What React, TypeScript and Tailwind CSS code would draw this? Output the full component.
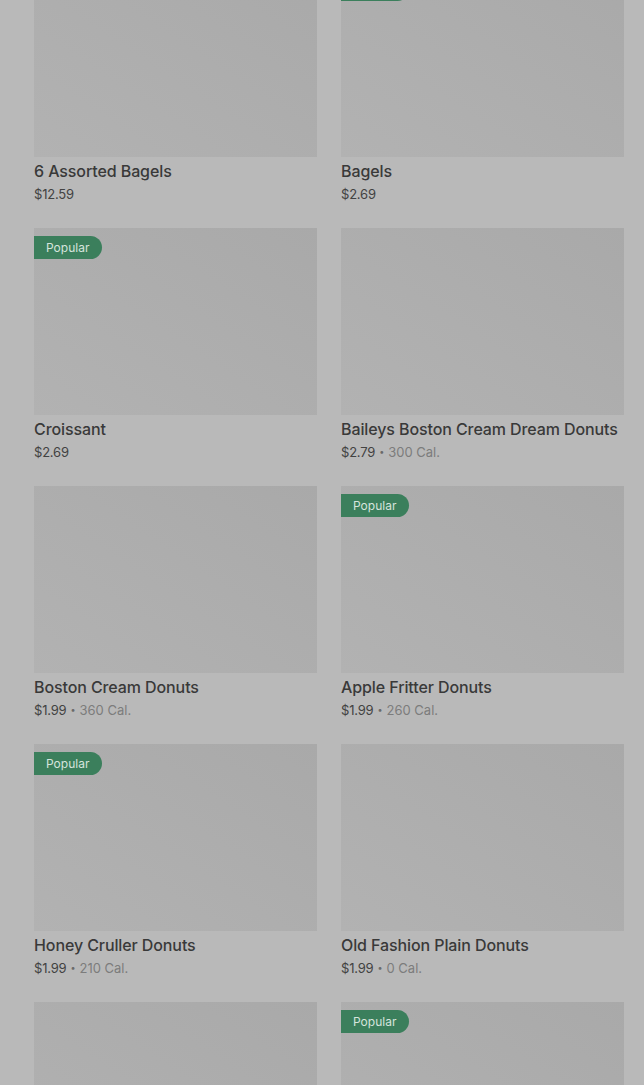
type Item = {
  name: string
  price: string
  cal?: string
  popular?: boolean
}

const items: Item[] = [
  { name: '6 Assorted Bagels', price: '$12.59' },
  { name: 'Bagels', price: '$2.69', popular: true },
  { name: 'Croissant', price: '$2.69', popular: true },
  { name: 'Baileys Boston Cream Dream Donuts', price: '$2.79', cal: '300 Cal.' },
  { name: 'Boston Cream Donuts', price: '$1.99', cal: '360 Cal.' },
  { name: 'Apple Fritter Donuts', price: '$1.99', cal: '260 Cal.', popular: true },
  { name: 'Honey Cruller Donuts', price: '$1.99', cal: '210 Cal.', popular: true },
  { name: 'Old Fashion Plain Donuts', price: '$1.99', cal: '0 Cal.' },
  { name: 'Chocolate Frosted Donuts', price: '$1.99', cal: '350 Cal.' },
  { name: 'Glazed Donuts', price: '$1.99', cal: '240 Cal.', popular: true },
]

function ItemCard({ item }: { item: Item }) {
  return (
    <div className="flex flex-col">
      <div className="relative h-[187px] bg-gradient-to-tr from-[#b2b2b2] to-[#a9a9a9]">
        {item.popular && (
          <span className="absolute left-0 top-[8px] flex h-[23px] items-center rounded-r-full bg-[#3b7f5c] pl-[12px] pr-[13px] text-[12px] leading-none text-[#d6e4dc]">
            Popular
          </span>
        )}
      </div>
      <div className="mt-[3px] h-[22px] truncate text-[16px] font-medium leading-[22px] tracking-[-0.1px] text-[#393939]">
        {item.name}
      </div>
      <div className="mt-[2px] flex h-[20px] items-center text-[13px] leading-[20px] text-[#424242]">
        <span className="tracking-[-0.2px]">{item.price}</span>
        {item.cal && (
          <>
            <span className="mx-[4px] text-[9px] text-[#6a6a6a]">•</span>
            <span className="text-[#7c7c7c]">{item.cal}</span>
          </>
        )}
      </div>
    </div>
  )
}

export default function App() {
  return (
    <div className="h-[1085px] overflow-hidden bg-[#b9b9b9] font-['Inter','Liberation_Sans',sans-serif]">
      <div className="-mt-[30px] grid grid-cols-2 gap-x-[24px] gap-y-[24px] pl-[34px] pr-[20px]">
        {items.map((item) => (
          <ItemCard key={item.name} item={item} />
        ))}
      </div>
    </div>
  )
}
